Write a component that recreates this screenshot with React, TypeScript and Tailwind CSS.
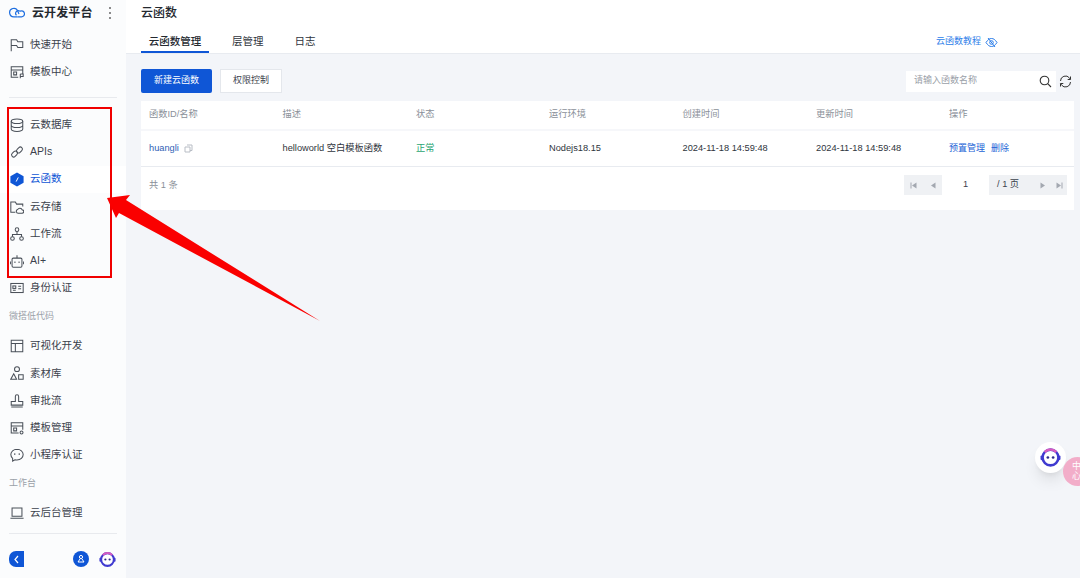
import React from "react";

const F = '"Liberation Sans", "Noto Sans CJK SC", sans-serif';

const S = ({ children }: { children: React.ReactNode }) => (
  <svg width="14" height="14" viewBox="0 0 17 17" fill="none" stroke="#4a5059" strokeWidth="1.250" className="shrink-0">
    {children}
  </svg>
);

const icons: Record<string, React.ReactNode> = {
  flag: <S><path d="M1.500 16V2h6.500l1.500 2.500h6v7H9.500L8 9H1.500" /></S>,
  tpl: <S><path d="M10 15H1.500V2h14v8.500M1.500 6h14M4.500 8.500h3.500v3.500H4.500zM12.500 11v5M12.500 11h3.500v3h-3.500" /></S>,
  db: <S><ellipse cx="8.500" cy="4" rx="7" ry="2.800" /><path d="M1.500 4v9.500c0 1.500 3 2.800 7 2.800s7-1.300 7-2.800V4M1.500 8.700c0 1.500 3 2.800 7 2.800s7-1.300 7-2.800" /></S>,
  link: <S><rect x="1.500" y="8.500" width="8" height="5" rx="2.500" transform="rotate(-45 5.500 11)" /><rect x="7.500" y="3.500" width="8" height="5" rx="2.500" transform="rotate(-45 11.500 6)" /></S>,
  fn: <svg width="14" height="15" viewBox="0 0 17 18" className="shrink-0"><path d="M8.500 .5l8 4.500v8l-8 4.500-8-4.500V5z" fill="#0f56d6" /><path d="M10 6.500l-2.500 5" stroke="#fff" strokeWidth="1.200" /></svg>,
  store: <S><path d="M6.500 15H1V2.500h5.500L8 5h7.500v3" /><path d="M10 16h4.500a2 2 0 0 0 .3-4 3 3 0 0 0-5.500-.5 2.300 2.300 0 0 0 .7 4.500z" /></S>,
  flow: <S><circle cx="8.500" cy="3.200" r="2.200" /><circle cx="3" cy="14" r="2.200" /><circle cx="14" cy="14" r="2.200" /><path d="M8.500 5.500V9M3 11.700V9h11v2.700" /></S>,
  bot: <S><rect x="2.500" y="5" width="12" height="11" rx="1.500" /><path d="M8.500 5V1.500M.5 9v3.500M16.500 9v3.500M6 9v2M11 9v2" /></S>,
  id: <S><rect x="1" y="3" width="15" height="11" /><rect x="3.500" y="6" width="3.500" height="3" /><path d="M3.500 11.300h3.500M10 6.500h3.500M10 9.500h3.500" /></S>,
  layout: <S><path d="M1.500 1.500h14v14h-14zM1.500 5.500h14M6.500 5.500v10" /></S>,
  mat: <S><circle cx="8.500" cy="3.800" r="3" /><path d="M4.500 9.500l3.500 6.500H1zM10.500 10.500H16V16h-5.500z" /></S>,
  stamp: <S><path d="M6.500 9V3a2 2 0 0 1 4 0v6h5v4.500h-14V9zM1.500 15.800h14" /></S>,
  tpl2: <S><path d="M10.500 14.500H1.500V2h14v8.500M1.500 6h14M4.500 8.500h3.500v3.500H4.500z" /><circle cx="14" cy="14" r="1.800" /></S>,
  chat: <S><path d="M8.500 1.500C4.200 1.500 1 4.400 1 8c0 1.800.8 3.400 2.200 4.600v3.200l2.900-1.600c.8.200 1.600.300 2.400.300 4.300 0 7.500-2.900 7.500-6.500s-3.200-6.500-7.500-6.500z" /><path d="M5.800 6.500v2M11.200 6.500v2" /></S>,
  laptop: <S><path d="M2.500 2.500h12v10h-12zM.5 15h16" /></S>,
};

const Item = ({ icon, label, active }: { icon: string; label: string; active?: boolean }) => (
  <div className={`flex h-[27.200px] items-center gap-[6px] pl-[10px] text-[10.500px] ${active ? "bg-white text-[#0f56d6]" : "text-[#3b424c]"}`}>
    <span className="flex w-[14px]">{icons[icon]}</span>
    <span>{label}</span>
  </div>
);

const Heading = ({ label }: { label: string }) => (
  <div className="flex h-[31px] items-center pl-[9px] text-[9px] text-[#9aa0a8]">{label}</div>
);

function Robot({ size }: { size: number }) {
  return (
    <svg width={size} height={size} viewBox="0 0 20 20">
      <circle cx="10" cy="10" r="7.500" fill="#fff" stroke="#3f3ad0" strokeWidth="2.400" />
      <path d="M4.500 4.800A7.500 7.500 0 0 1 15.500 4.800" fill="none" stroke="#d55bc0" strokeWidth="2.400" />
      <rect x="0.500" y="8" width="2" height="4.500" rx="1" fill="#3f3ad0" />
      <rect x="17.500" y="8" width="2" height="4.500" rx="1" fill="#3f3ad0" />
      <circle cx="7.500" cy="10" r="1.300" fill="#2c2a8c" />
      <circle cx="12.500" cy="10" r="1.300" fill="#2c2a8c" />
    </svg>
  );
}

const Sidebar = () => (
  <aside className="flex h-[578px] w-[126px] shrink-0 flex-col bg-[#fbfcfd]">
    <div className="flex h-[25px] shrink-0 items-center pl-[9px]">
      <svg width="16" height="11" viewBox="0 0 16 11" fill="none" stroke="#1f6fe0" strokeWidth="1.200">
        <path d="M8.500 9.800H4.800a4.200 4.200 0 1 1 3.900-5.800l1.300 3" />
        <path d="M7.500 8.200a2.600 2.600 0 0 1 2.800-4.300c.3 0 .6.100.9.200a3 3 0 1 1 1 5.700H8.500" />
      </svg>
      <span className="ml-[7px] text-[12px] font-bold tracking-[.1px] text-[#24292f]">云开发平台</span>
      <span className="ml-[16px] flex flex-col gap-[3px]">
        <i className="block h-[2px] w-[2px] rounded-full bg-[#666]" />
        <i className="block h-[2px] w-[2px] rounded-full bg-[#666]" />
        <i className="block h-[2px] w-[2px] rounded-full bg-[#666]" />
      </span>
    </div>
    <div className="h-[6px] shrink-0" />
    <Item icon="flag" label="快速开始" />
    <Item icon="tpl" label="模板中心" />
    <div className="mx-[9px] mb-[13px] mt-[12px] h-px bg-[#e8eaee]" />
    <Item icon="db" label="云数据库" />
    <Item icon="link" label="APIs" />
    <Item icon="fn" label="云函数" active />
    <Item icon="store" label="云存储" />
    <Item icon="flow" label="工作流" />
    <Item icon="bot" label="AI+" />
    <Item icon="id" label="身份认证" />
    <Heading label="微搭低代码" />
    <Item icon="layout" label="可视化开发" />
    <Item icon="mat" label="素材库" />
    <Item icon="stamp" label="审批流" />
    <Item icon="tpl2" label="模板管理" />
    <Item icon="chat" label="小程序认证" />
    <Heading label="工作台" />
    <Item icon="laptop" label="云后台管理" />
    <div className="mx-[9px] mt-[6px] h-px bg-[#e8eaee]" />
    <div className="mt-[17px] flex items-center pl-[9px]">
      <span className="flex h-[16px] w-[15px] items-center justify-center rounded-l-[7px] bg-[#0f56d6]">
        <svg width="7" height="9" viewBox="0 0 7 9" fill="none" stroke="#fff" strokeWidth="1.200"><path d="M5 1L2 4.500 5 8" /></svg>
      </span>
      <span className="ml-[49px] flex h-[16px] w-[16px] items-center justify-center rounded-full bg-[#0f56d6]">
        <svg width="10" height="10" viewBox="0 0 10 10" fill="none" stroke="#fff" strokeWidth="1"><circle cx="5" cy="3" r="1.600" /><path d="M4 5L2 8h6L6 5" /></svg>
      </span>
      <span className="ml-[10px] flex"><Robot size={17} /></span>
    </div>
  </aside>
);

const cols = ["w-[133.500px]", "w-[133.500px]", "w-[133px]", "w-[133.500px]", "w-[133.500px]", "w-[133px]", "flex-1"];
const head = ["函数ID/名称", "描述", "状态", "运行环境", "创建时间", "更新时间", "操作"];

const Tri = ({ dir, bar }: { dir: "l" | "r"; bar?: boolean }) => (
  <svg width="8" height="7" viewBox="0 0 8 7" fill="#a3a8b0">
    {dir === "l" ? <path d="M6.500 .5v6L2 3.500z" /> : <path d="M1.500 .5v6L6 3.500z" />}
    {bar && (dir === "l" ? <rect x="0.500" y=".5" width="1" height="6" /> : <rect x="6.500" y=".5" width="1" height="6" />)}
  </svg>
);

const Main = () => (
  <main className="flex h-[578px] min-w-0 flex-1 flex-col bg-[#f3f5f9]">
    <header className="h-[54px] shrink-0 border-b border-[#e8ebf0] bg-white pl-[15px]">
      <div className="flex h-[25px] items-center text-[12px] font-medium text-[#24292f]">云函数</div>
      <div className="flex h-[28px] items-center pr-[82px]">
        <span className="flex h-[28px] w-[68px] items-center justify-center border-b-2 border-[#0f56d6] pt-[8px] text-[10.500px] font-medium text-[#24292f]">云函数管理</span>
        <span className="ml-[23px] pt-[6px] text-[10.500px] text-[#2f353d]">层管理</span>
        <span className="ml-[31px] pt-[6px] text-[10.500px] text-[#2f353d]">日志</span>
        <span className="ml-auto flex items-center gap-[4px] pt-[6px] text-[9px] text-[#2b7de9]">
          云函数教程
          <svg width="13" height="11" viewBox="0 0 13 11" fill="none" stroke="#2b7de9" strokeWidth="1"><path d="M1 5.500C3 2.500 4.500 1.500 6.500 1.500s3.500 1 5.500 4c-2 3-3.500 4-5.500 4s-3.500-1-5.500-4zM3 1l7 9" /><circle cx="6.500" cy="5.500" r="1.800" /></svg>
        </span>
      </div>
    </header>
    <div className="pl-[15px] pr-[6px]">
      <div className="mt-[15px] flex items-center">
        <button className="flex h-[24px] w-[71px] items-center justify-center rounded-[2px] bg-[#0f56d6] text-[9px] text-white">新建云函数</button>
        <button className="ml-[8px] flex h-[24px] w-[62px] items-center justify-center border border-[#e4e7ec] bg-white text-[9px] text-[#3b424c]">权限控制</button>
        <div className="ml-auto flex h-[21px] w-[150px] items-center bg-white pl-[8px] pr-[4px] text-[9px] text-[#9aa0a8]">
          <span className="flex-1">请输入函数名称</span>
          <svg width="13" height="13" viewBox="0 0 13 13" fill="none" stroke="#333" strokeWidth="1.100"><circle cx="5.500" cy="5.500" r="4.300" /><path d="M8.700 8.700l3.300 3.300" /></svg>
        </div>
        <svg className="ml-[3px] mr-[2px]" width="13" height="13" viewBox="0 0 13 13" fill="none" stroke="#333" strokeWidth="1"><path d="M1.500 6A5 5 0 0 1 10.500 3l1 1.200M11.500 1.500v3H8.700M11.500 7A5 5 0 0 1 2.500 10l-1-1.200M1.500 11.500v-3h2.800" /></svg>
      </div>
      <section className="mt-[8px] bg-white">
        <div className="flex h-[30px] items-center border-b-2 border-[#f6f7fa] text-[9.250px] text-[#8a9099]">
          {head.map((h, i) => <div key={h} className={`${cols[i]} pl-[8px]`}>{h}</div>)}
        </div>
        <div className="flex h-[36px] items-center border-b border-[#e8ebf0] text-[9.250px] text-[#2f353d]">
          <div className={`${cols[0]} flex items-center pl-[8px] text-[#2f5fb5]`}>
            huangli
            <svg className="ml-[5px]" width="9" height="9" viewBox="0 0 9 9" fill="none" stroke="#b8bdc5" strokeWidth="1"><path d="M3 1h5v5.500H6M1 3h5v5H1z" /></svg>
          </div>
          <div className={`${cols[1]} pl-[8px]`}>helloworld 空白模板函数</div>
          <div className={`${cols[2]} pl-[8px] text-[#2ba471]`}>正常</div>
          <div className={`${cols[3]} pl-[8px]`}>Nodejs18.15</div>
          <div className={`${cols[4]} pl-[8px]`}>2024-11-18 14:59:48</div>
          <div className={`${cols[5]} pl-[8px]`}>2024-11-18 14:59:48</div>
          <div className={`${cols[6]} flex gap-[6px] pl-[8px] text-[9px] text-[#1a62d6]`}><span>预置管理</span><span>删除</span></div>
        </div>
        <div className="flex h-[43px] items-start justify-between pl-[8px] pr-[7px] pt-[8px] text-[9.250px] text-[#8a9099]">
          <span className="flex h-[21px] items-center">共 1 条</span>
          <div className="flex h-[20px] w-[163px] items-center bg-[#eff1f4] text-[#3b424c]">
            <span className="flex w-[19px] justify-center"><Tri dir="l" bar /></span>
            <span className="flex w-[19px] justify-center"><Tri dir="l" /></span>
            <span className="flex h-[20px] w-[47px] items-center justify-center bg-white">1</span>
            <span className="ml-[8px] w-[38px]">/ 1 页</span>
            <span className="flex w-[16px] justify-center"><Tri dir="r" /></span>
            <span className="flex w-[16px] justify-center"><Tri dir="r" bar /></span>
          </div>
        </div>
      </section>
    </div>
  </main>
);

export default function App() {
  return (
    <div className="relative flex h-[578px] w-[1080px] overflow-hidden" style={{ fontFamily: F }}>
      <Sidebar />
      <Main />
      <div className="absolute left-[7px] top-[107px] h-[171px] w-[105px] border-2 border-[#f00000]" />
      <svg className="absolute left-0 top-0" width="1080" height="578" viewBox="0 0 1080 578">
        <polygon points="107,198 130,195 126,200 320,321 119,213 116,218" fill="#fa0000" />
      </svg>
      <div className="absolute left-[1035px] top-[442px] flex h-[31px] w-[31px] items-center justify-center rounded-full bg-white shadow-lg"><Robot size={21} /></div>
      <div className="absolute left-[1063px] top-[457px] h-[29px] w-[29px] rounded-full bg-[#f2adc9] pl-[9px] pt-[4px] text-[9px] leading-[10px] text-white">中<br />心</div>
    </div>
  );
}
